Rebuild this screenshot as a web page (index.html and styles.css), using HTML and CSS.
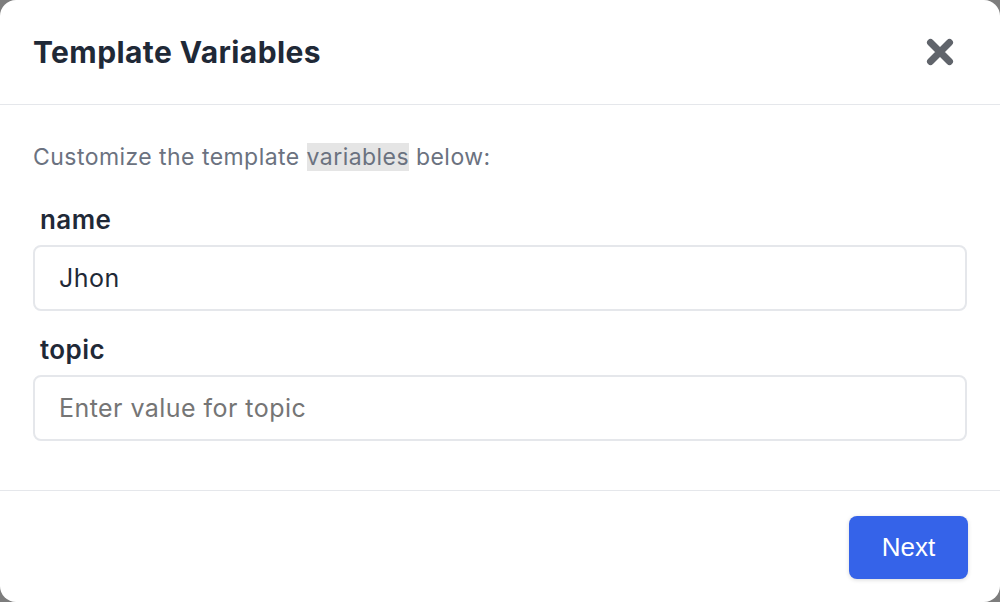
FILE: index.html
```html
<!DOCTYPE html>
<html lang="en">
<head>
<meta charset="utf-8">
<title>Template Variables</title>
<link rel="stylesheet" href="styles.css">
</head>
<body>
<div class="modal">
  <header class="modal-header">
    <h2 class="modal-title">Template Variables</h2>
    <button class="close-btn" aria-label="Close">
      <svg width="28" height="28" viewBox="0 0 28 28"><path d="M4.5 4.5 L23.5 23.5 M23.5 4.5 L4.5 23.5" stroke="#60646b" stroke-width="7" stroke-linecap="round" fill="none"/></svg>
    </button>
  </header>
  <div class="modal-body">
    <p class="intro">Customize the template <span class="hl">variables</span> below:</p>
    <div class="field">
      <label class="field-label">name</label>
      <input class="field-input" type="text" value="Jhon">
    </div>
    <div class="field">
      <label class="field-label">topic</label>
      <input class="field-input" type="text" placeholder="Enter value for topic">
    </div>
  </div>
  <footer class="modal-footer">
    <button class="next-btn">Next</button>
  </footer>
</div>
</body>
</html>
```
FILE: styles.css
```css
html, body {
  margin: 0;
  padding: 0;
  background: #7d7d7d;
}
.modal {
  width: 1000px;
  height: 602px;
  background: #fff;
  border-radius: 16px;
  display: flex;
  flex-direction: column;
  font-family: Inter, "Noto Sans", sans-serif;
  overflow: hidden;
}
.modal-header {
  box-sizing: border-box;
  height: 105px;
  border-bottom: 1px solid #e5e7eb;
  display: flex;
  align-items: center;
  justify-content: space-between;
  padding: 0 46px 0 33px;
}
.modal-title {
  margin: 0;
  font-size: 30px;
  font-weight: 700;
  color: #1f2937;
  letter-spacing: 0.4px;
}
.close-btn {
  border: 0;
  background: none;
  padding: 0;
  width: 28px;
  height: 28px;
  display: flex;
}
.modal-body {
  padding: 35px 33px 0 33px;
  height: 386px;
  box-sizing: border-box;
  border-bottom: 1px solid #e5e7eb;
}
.intro {
  margin: 0 0 30px 0;
  font-size: 23px;
  line-height: 35px;
  letter-spacing: 0.45px;
  color: #6b7280;
}
.hl {
  background: #e5e5e5;
}
.field {
  display: flex;
  flex-direction: column;
  margin-bottom: 24px;
}
.field-label {
  padding-left: 7px;
  font-size: 26px;
  line-height: 30px;
  font-weight: 600;
  letter-spacing: 0.4px;
  color: #1f2937;
  margin-bottom: 10px;
}
.field-input {
  box-sizing: border-box;
  height: 66px;
  width: 100%;
  border: 2px solid #e5e7eb;
  border-radius: 8px;
  padding: 0 24px;
  font-family: Inter, "Noto Sans", sans-serif;
  font-size: 25px;
  letter-spacing: 0.45px;
  color: #1f2937;
  outline: none;
}
.field-input::placeholder {
  color: #757575;
}
.modal-footer {
  flex: 1;
  display: flex;
  justify-content: flex-end;
  align-items: flex-start;
  padding: 25px 32px 0 0;
}
.next-btn {
  width: 119px;
  height: 63px;
  border: 0;
  border-radius: 8px;
  background: #3563e9;
  color: #fff;
  font-family: "Liberation Sans", Arial, sans-serif;
  font-size: 26px;
  box-shadow: 0 1px 4px rgba(0,0,0,0.15);
}
```
